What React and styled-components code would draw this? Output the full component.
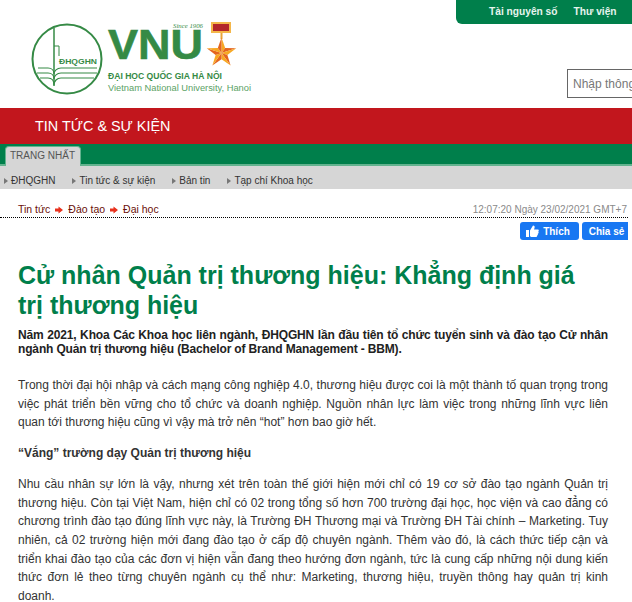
import React from "react";
import styled, { createGlobalStyle } from "styled-components";

const GlobalStyle = createGlobalStyle`
    html, body {
        margin: 0;
        padding: 0;
        background: white;
        overflow: hidden;
    }
    body {
        font-family: "Liberation Sans", Arial, sans-serif;
        color: #333;
    }
`;

const Page = styled.div`
    width: 632px;
    height: 602px;
    overflow: hidden;
`;

const Header = styled.header`
    height: 108px;
    position: relative;
`;

const TopLinks = styled.nav`
    position: absolute;
    top: 0;
    right: 0;
    width: 176px;
    height: 24px;
    box-sizing: border-box;
    padding: 5px 0 0 33px;
    display: flex;
    gap: 16px;
    background: #007f4b;
    border-bottom-left-radius: 6px;
`;

const TopLink = styled.a`
    font-size: 10.2px;
    font-weight: bold;
    line-height: 13px;
    color: #e6f4ee;
`;

const LogoBox = styled.div`
    padding: 20px 0 0 30px;
    width: 226px;
    height: 76px;
`;

const SearchInput = styled.input`
    position: absolute;
    left: 567px;
    top: 69px;
    width: 90px;
    height: 29px;
    box-sizing: border-box;
    padding: 0 5px;
    border: 1px solid #666;
    font: 12px "Liberation Sans", Arial, sans-serif;
    &::placeholder {
        color: #777;
        opacity: 1;
    }
`;

const RedBand = styled.div`
    height: 36px;
    box-sizing: border-box;
    padding: 10px 0 0 35px;
    background: #c2161d;
    color: #fff;
    font-size: 14.4px;
    line-height: 16px;
`;

const GreenBand = styled.div`
    height: 22px;
    box-sizing: border-box;
    padding: 2px 0 0 5px;
    background: #007f4b;
    border-bottom: 2px solid #63b38f;
`;

const Tab = styled.div`
    width: 76px;
    height: 20px;
    box-sizing: border-box;
    padding: 3px 0 0 4px;
    background: #d6d6d6;
    border: 1px solid #63b38f;
    border-bottom: none;
    border-radius: 4px 4px 0 0;
    font-size: 10px;
    line-height: 12px;
    color: #555;
`;

const SubNav = styled.nav`
    height: 23px;
    box-sizing: border-box;
    padding: 6px 0 0 4px;
    display: flex;
    gap: 17px;
    background: #d6d6d6;
`;

const SubLink = styled.a`
    display: flex;
    align-items: center;
    gap: 3px;
    font-size: 10px;
    line-height: 12px;
    color: #333;
    &::before {
        content: "";
        border-left: 4px solid #777;
        border-top: 3px solid transparent;
        border-bottom: 3px solid transparent;
    }
`;

const InfoRow = styled.div`
    margin: 8px 4px 0 0;
    height: 21px;
    box-sizing: border-box;
    padding: 0 1px 1px 18px;
    display: flex;
    justify-content: space-between;
    align-items: flex-end;
    border-bottom: 1px dotted #000;
`;

const Crumbs = styled.div`
    display: flex;
    align-items: center;
    gap: 5px;
    font-size: 10.5px;
    line-height: 13px;
    color: #6a0f08;
`;

const Stamp = styled.div`
    font-size: 10px;
    line-height: 13px;
    color: #8a8a8a;
`;

const ShareRow = styled.div`
    margin: 4px 4px 0 0;
    display: flex;
    justify-content: flex-end;
    gap: 3px;
`;

const FbButton = styled.button`
    width: ${p => p.$width}px;
    height: 18px;
    padding: ${p => p.$flat ? "0 0 0 3px" : "0 3px 0 0"};
    display: flex;
    align-items: center;
    justify-content: center;
    gap: 4px;
    border: none;
    border-radius: ${p => p.$flat ? "3px 0 0 3px" : "3px"};
    background: #1877f2;
    color: #fff;
    font: bold 10px "Liberation Sans", Arial, sans-serif;
`;

const Article = styled.article`
    padding: 21px 24px 0 18px;
`;

const Title = styled.h1`
    margin: 0;
    padding-right: 24px;
    font-size: 25px;
    line-height: 29.5px;
    font-weight: bold;
    color: #007f4b;
`;

const Lead = styled.p`
    margin: 8px 0 0;
    font-size: 12px;
    line-height: 14px;
    font-weight: bold;
    letter-spacing: -0.15px;
    text-align: justify;
    color: #222;
`;

const Body = styled.p`
    margin: ${p => p.$top}px 0 0;
    font-size: 12px;
    line-height: 18.7px;
    text-align: justify;
    color: #333;
`;

const Subhead = styled.p`
    margin: 12px 0 0;
    font-size: 12px;
    line-height: 18.7px;
    font-weight: bold;
    color: #333;
`;

const starCenter = [191.5, 33];

// outer and inner points of the medal star, walking round from the top
function starPoint(i) {
    const r = i % 2 === 0 ? 15.5 : 6.2;
    const a = -Math.PI / 2 + i * Math.PI / 5;
    return [starCenter[0] + r * Math.cos(a), starCenter[1] + r * Math.sin(a)];
}

function Logo() {
    const facets = [];
    for (let i = 0; i < 10; i++) {
        const a = starPoint(i);
        const b = starPoint(i + 1);
        facets.push(<polygon
            key={i}
            points={`${starCenter.join(",")} ${a.join(",")} ${b.join(",")}`}
            fill={i % 2 === 0 ? "#f7a823" : "#e4651f"}
        />);
    }
    return <svg width="226" height="76" viewBox="0 0 226 76">
        <g fill="none" stroke="#358a45">
            <circle cx="37" cy="39" r="34.5" strokeWidth="2" />
            <path d="M24 8V66" strokeWidth="1.5" />
            <path d="M24 26H29V36" strokeWidth="1" />
            <path d="M8 48H18C22 48 24 51 24 54C24 51 27 48 31 48H67" strokeWidth="1.2" />
            <path d="M7 53H18C22 53 24 56 24 59C24 56 27 53 31 53H67" strokeWidth="1.2" />
            <path d="M10 58H18C22 58 24 61 24 65C24 61 27 58 31 58H64" strokeWidth="1.2" />
        </g>
        <text x="29" y="44" fontFamily="Liberation Sans" fontSize="7.5" fontWeight="bold" textLength="38" lengthAdjust="spacingAndGlyphs" fill="#358a45">ĐHQGHN</text>
        <text x="143" y="7.5" fontFamily="Liberation Serif" fontSize="6" fontStyle="italic" textLength="30" lengthAdjust="spacingAndGlyphs" fill="#358a45">Since 1906</text>
        <text x="78" y="39" fontFamily="Liberation Sans" fontSize="42" fontWeight="bold" textLength="95" lengthAdjust="spacingAndGlyphs" fill="#358a45" stroke="#358a45" strokeWidth="0.6">VNU</text>
        <rect x="181" y="2" width="20" height="11" fill="#f4b74a" />
        <rect x="183" y="4" width="16" height="7" fill="#b3262a" />
        <rect x="190.5" y="13" width="2" height="6" fill="#e9a53a" />
        {facets}
        <text x="78" y="59" fontFamily="Liberation Sans" fontSize="8.5" fontWeight="bold" textLength="114" lengthAdjust="spacingAndGlyphs" fill="#358a45">ĐẠI HỌC QUỐC GIA HÀ NỘI</text>
        <text x="78" y="70.5" fontFamily="Liberation Sans" fontSize="8.5" textLength="143" lengthAdjust="spacingAndGlyphs" fill="#5aa265">Vietnam National University, Hanoi</text>
    </svg>;
}

function ThumbIcon() {
    return <svg width="13" height="12" viewBox="0 0 13 12" fill="#fff">
        <rect x="0" y="5" width="3" height="7" />
        <path d="M4 5.5L7 0.5C8.5 0.5 9 1.5 8.5 3L8 4.5H12C13 4.5 13 6 12.3 6.5C13 7.5 12.5 8.5 11.8 8.8C12.2 9.8 11.5 10.5 11 10.7C11.2 11.5 10.5 12 10 12H6C5 12 4 11.5 4 11Z" />
    </svg>;
}

function CrumbArrow() {
    return <svg width="8" height="8" viewBox="0 0 8 8" fill="#e8301c">
        <path d="M0 2.5H3.5V0.5L8 4L3.5 7.5V5.5H0Z" />
    </svg>;
}

export default function App() {
    return <Page>
        <GlobalStyle />
        <Header>
            <TopLinks>
                <TopLink>Tài nguyên số</TopLink>
                <TopLink>Thư viện</TopLink>
            </TopLinks>
            <LogoBox>
                <Logo />
            </LogoBox>
            <SearchInput placeholder="Nhập thông tin tìm kiếm" />
        </Header>
        <RedBand>TIN TỨC &amp; SỰ KIỆN</RedBand>
        <GreenBand>
            <Tab>TRANG NHẤT</Tab>
        </GreenBand>
        <SubNav>
            <SubLink>ĐHQGHN</SubLink>
            <SubLink>Tin tức &amp; sự kiện</SubLink>
            <SubLink>Bản tin</SubLink>
            <SubLink>Tạp chí Khoa học</SubLink>
        </SubNav>
        <InfoRow>
            <Crumbs>
                <span>Tin tức</span><CrumbArrow />
                <span>Đào tạo</span><CrumbArrow />
                <span>Đại học</span>
            </Crumbs>
            <Stamp>12:07:20 Ngày 23/02/2021 GMT+7</Stamp>
        </InfoRow>
        <ShareRow>
            <FbButton $width={59}><ThumbIcon />Thích</FbButton>
            <FbButton $width={46} $flat>Chia sẻ</FbButton>
        </ShareRow>
        <Article>
            <Title>Cử nhân Quản trị thương hiệu: Khẳng định giá trị thương hiệu</Title>
            <Lead>Năm 2021, Khoa Các Khoa học liên ngành, ĐHQGHN lần đầu tiên tổ chức tuyển sinh và đào tạo Cử nhân ngành Quản trị thương hiệu (Bachelor of Brand Management - BBM).</Lead>
            <Body $top={20}>Trong thời đại hội nhập và cách mạng công nghiệp 4.0, thương hiệu được coi là một thành tố quan trọng trong việc phát triển bền vững cho tổ chức và doanh nghiệp. Nguồn nhân lực làm việc trong những lĩnh vực liên quan tới thương hiệu cũng vì vậy mà trở nên “hot” hơn bao giờ hết.</Body>
            <Subhead>“Vắng” trường dạy Quản trị thương hiệu</Subhead>
            <Body $top={12}>Nhu cầu nhân sự lớn là vậy, nhưng xét trên toàn thế giới hiện mới chỉ có 19 cơ sở đào tạo ngành Quản trị thương hiệu. Còn tại Việt Nam, hiện chỉ có 02 trong tổng số hơn 700 trường đại học, học viện và cao đẳng có chương trình đào tạo đúng lĩnh vực này, là Trường ĐH Thương mại và Trường ĐH Tài chính – Marketing. Tuy nhiên, cả 02 trường hiện mới đang đào tạo ở cấp độ chuyên ngành. Thêm vào đó, là cách thức tiếp cận và triển khai đào tạo của các đơn vị hiện vẫn đang theo hướng đơn ngành, tức là cung cấp những nội dung kiến thức đơn lẻ theo từng chuyên ngành cụ thể như: Marketing, thương hiệu, truyền thông hay quản trị kinh doanh.</Body>
        </Article>
    </Page>;
}
